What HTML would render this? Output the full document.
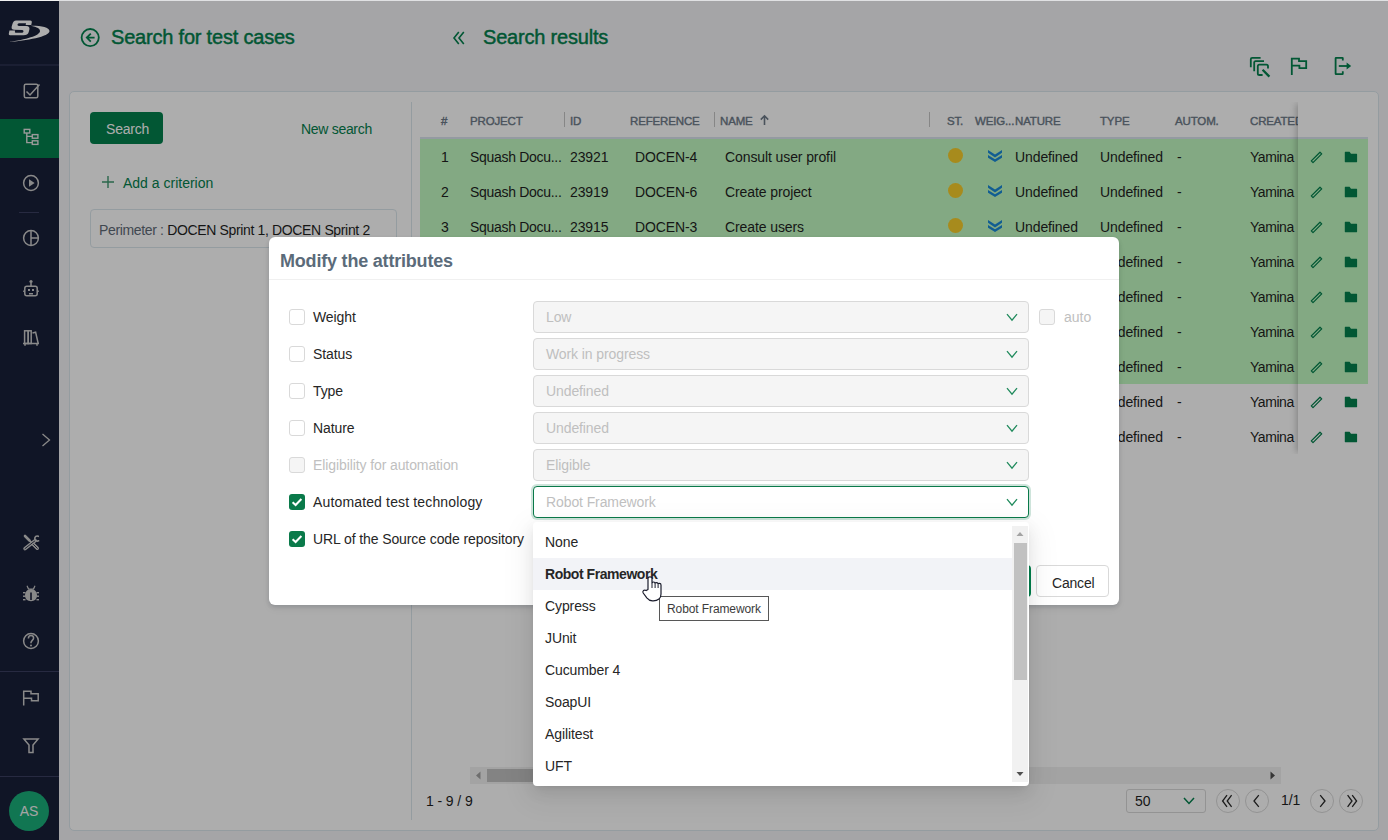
<!DOCTYPE html>
<html><head><meta charset="utf-8">
<style>
*{box-sizing:border-box;margin:0;padding:0}
html,body{width:1388px;height:840px;overflow:hidden}
body{position:relative;background:#f3f4f7;font-family:"Liberation Sans",sans-serif;font-size:14px;color:#1f1f1f}
.a{position:absolute}
.t{position:absolute;white-space:nowrap;line-height:1}
#side{left:0;top:0;width:59px;height:840px;background:#191f38}
#card{left:69px;top:91px;width:1310px;height:740px;background:#fff;border:1px solid #dbe6ec;border-radius:5px}
#overlay{left:0;top:0;width:1388px;height:840px;background:rgba(0,0,0,.32)}
#modal{left:269px;top:237px;width:850px;height:368px;background:#fff;border-radius:6px;box-shadow:0 2px 4px rgba(0,20,40,.14),0 4px 10px rgba(0,0,0,.04)}
.hd{font-size:20px;color:#03804d;letter-spacing:-0.2px;-webkit-text-stroke:0.45px #03804d}
.th{font-size:11.5px;color:#6d7a88;letter-spacing:-0.15px;-webkit-text-stroke:0.4px #6d7a88}
.td{font-size:14px;color:#1f1f1f;letter-spacing:-0.1px}
</style></head><body>
<div id="side" class="a"></div>
<svg class="a" style="left:0;top:0" width="59" height="840" viewBox="0 0 59 840">
<g fill="#fff">
<path transform="translate(3.93,0) skewX(-8)" d="M15,20.4 L29.2,20.4 Q31.2,20.4 31,22.4 L30.8,24.9 L25.2,24.9 L25.4,23.3 L18.3,23.3 Q17,23.4 17,24.6 Q17,25.9 18.6,25.9 L26,26.1 Q29.8,26.3 29.6,29.5 L29.3,32 Q28.9,35.3 24.5,35.3 L11,35.3 Q9.4,35.2 9.6,33.5 L9.8,30.5 L15.5,30.5 L15.4,32 Q15.4,32.7 16.5,32.7 L23,32.7 Q24,32.7 24,31.6 Q24,30 22.5,30 L14.5,29.8 Q11.3,29.7 11.5,26.5 L11.8,24.5 Q12.2,20.4 15,20.4 Z"/>
<path d="M8.5,41.9 C26,41 49.8,36.5 49.5,31 C49.3,27.4 41,25.6 30.5,25.8 C37.5,27 40.2,29 40,31.3 C39.8,35.5 26,39.8 8.5,41.9 Z"/>
</g>
<rect x="0" y="64.5" width="59" height="1" fill="#3a3e60"/>
<g fill="none" stroke="#cbcbcb" stroke-width="1.5">
<rect x="24.3" y="84.3" width="13.5" height="13.5" rx="1.5"/>
<path d="M26.5,91.5 L30,95 L39.5,84.5"/>
</g>
<rect x="0" y="119" width="59" height="39" fill="#03804d"/>
<g fill="none" stroke="#e4e4e4" stroke-width="1.4">
<rect x="24.2" y="129.4" width="5.6" height="3.6"/>
<rect x="32.3" y="134.6" width="5.6" height="3.6"/>
<rect x="32.3" y="140.8" width="5.6" height="3.6"/>
<path d="M26.8,133 V142.6 H32.3 M26.8,136.4 H32.3"/>
</g>
<g fill="none" stroke="#cbcbcb" stroke-width="1.5">
<circle cx="31" cy="183" r="7.4"/>
<circle cx="31" cy="238" r="7.4"/>
<path d="M31,230.6 V245.4 M31,238 H38.4"/>
<circle cx="31" cy="641" r="7.4"/>
</g>
<path d="M29,179.3 L34.6,183 L29,186.7 Z" fill="#cbcbcb"/>
<rect x="19" y="212" width="20" height="1" fill="#3a3e60"/>
<g fill="none" stroke="#cbcbcb" stroke-width="1.5">
<rect x="24.8" y="286.2" width="12.4" height="9.6" rx="2"/>
<path d="M31,283 V286.2 M23.2,291.2 H24.8 M37.2,291.2 H38.8"/>
</g>
<g fill="#cbcbcb">
<circle cx="31" cy="281.5" r="1.6"/>
<rect x="28" y="289" width="2" height="2"/><rect x="32" y="289" width="2" height="2"/>
<rect x="29" y="293" width="4" height="1.5"/>
</g>
<g fill="none" stroke="#cbcbcb" stroke-width="1.5">
<path d="M23,343.5 H39 M25,343.5 V345.8 M37,343.5 V345.8"/>
<rect x="24.6" y="330.8" width="3.6" height="12.7"/>
<rect x="28.2" y="330.8" width="3" height="12.7"/>
<path d="M32.5,333 L35.6,332.2 L38.2,343.5"/>
</g>
<path d="M42.5,434 L49.5,440 L42.5,446" fill="none" stroke="#cbcbcb" stroke-width="1.3"/>
<g fill="none" stroke-linecap="round">
<path d="M25,536 L29.5,540.5" stroke="#cbcbcb" stroke-width="2.6"/>
<path d="M32,543 L37.3,548.3" stroke="#cbcbcb" stroke-width="3.4"/>
<path d="M32,543 L37.3,548.3" stroke="#191f38" stroke-width="0.9"/>
<path d="M29,540 L32.5,543.5" stroke="#cbcbcb" stroke-width="1.2"/>
<path d="M35.2,540.6 L25,548.6" stroke="#cbcbcb" stroke-width="3.4"/>
<path d="M35.2,540.6 L25,548.6" stroke="#191f38" stroke-width="0.9"/>
<path d="M38.3,536.3 C36.6,535.3 34.5,536.8 34.8,539 C35,540.6 36.8,541.6 38.6,540.8" stroke="#cbcbcb" stroke-width="1.6"/>
</g>
<g fill="#cbcbcb">
<path d="M31,589 C35,589 37,592 37,595.5 C37,599 34.5,601.2 31,601.2 C27.5,601.2 25,599 25,595.5 C25,592 27,589 31,589 Z"/>
<path d="M27.5,585.5 L29,588.5 H33 L34.5,585.5 L35.5,586 L34,589.5 H28 L26.5,586 Z"/>
<rect x="23" y="592" width="2.5" height="1.4"/><rect x="23" y="595.5" width="2.5" height="1.4"/><rect x="23" y="599" width="2.5" height="1.4"/>
<rect x="36.5" y="592" width="2.5" height="1.4"/><rect x="36.5" y="595.5" width="2.5" height="1.4"/><rect x="36.5" y="599" width="2.5" height="1.4"/>
</g>
<rect x="30.2" y="592.5" width="1.6" height="7.5" fill="#191f38"/>
<path d="M28.4,638.6 C28.4,636.8 29.6,635.6 31,635.6 C32.5,635.6 33.6,636.7 33.6,638.1 C33.6,640.2 31,640.5 31,642.6 V643.3" fill="none" stroke="#cbcbcb" stroke-width="1.5"/><circle cx="31" cy="645.6" r="1" fill="#cbcbcb"/>
<rect x="0" y="671" width="59" height="1" fill="#3a3e60"/>
<g fill="none" stroke="#cbcbcb" stroke-width="1.5">
<path d="M23.7,705.6 V691.2 H31 V693.8 H38.2 V700.8 H31.5 V698.2 H23.7"/>
<path d="M23.9,738.9 H38.1 L33,745 V752.6 H29 V745 Z"/>
</g>
<rect x="0" y="776" width="59" height="1" fill="#3a3e60"/>
<circle cx="29" cy="811" r="20" fill="#1aae7a"/>
<text x="29" y="816.3" text-anchor="middle" font-family="Liberation Sans" font-size="14" fill="#f2f2f2">AS</text>
</svg>
<div id="card" class="a"></div>

<!-- header -->
<svg class="a" style="left:80px;top:27px" width="21" height="21" viewBox="0 0 21 21"><g fill="none" stroke="#03804d" stroke-width="1.8"><circle cx="10.2" cy="10.6" r="8.6"/><path d="M10.8,6.6 L6.8,10.6 L10.8,14.6 M6.8,10.6 H14.6"/></g></svg>
<div class="t hd" style="left:111px;top:27px">Search for test cases</div>
<svg class="a" style="left:452px;top:30px" width="14" height="16" viewBox="0 0 14 16"><g fill="none" stroke="#03804d" stroke-width="1.6"><path d="M6.8,2 L2,8 L6.8,14 M11.8,2 L7,8 L11.8,14"/></g></svg>
<div class="t hd" style="left:483px;top:27px">Search results</div>

<svg class="a" style="left:1248px;top:55px" width="24" height="24" viewBox="0 0 24 24"><g fill="none" stroke="#03804d" stroke-width="1.8" stroke-linecap="butt">
<path d="M2.8,12.2 V4.2 Q2.8,2.8 4.2,2.8 H12.6"/><path d="M6.2,16.2 V7.6 Q6.2,6.2 7.6,6.2 H16"/><path d="M14.6,20 H11.4 Q9.8,20 9.8,18.4 V11.2 Q9.8,9.6 11.4,9.6 H18.4 Q20,9.6 20,11.2 V13.6"/>
<path d="M14.6,14.8 L21.4,21.6" stroke-width="2.3" stroke-linecap="butt"/></g></svg>
<svg class="a" style="left:1289px;top:55px" width="20" height="22" viewBox="0 0 20 22"><g fill="none" stroke="#03804d" stroke-width="1.8">
<path d="M2.8,20 V3.6 H10 V6.2 H17.2 V13.2 H10.4 V10.6 H2.8"/></g></svg>
<svg class="a" style="left:1332px;top:55px" width="22" height="22" viewBox="0 0 22 22"><g fill="none" stroke="#03804d" stroke-width="1.8">
<path d="M10.8,5.6 V3.2 Q10.8,2.8 10.4,2.8 H4 Q3.6,2.8 3.6,3.2 V18.8 Q3.6,19.2 4,19.2 H10.4 Q10.8,19.2 10.8,18.8 V16.2"/>
<path d="M6.8,11 H16"/></g><path d="M14.6,7.6 L19.2,11 L14.6,14.4 Z" fill="#03804d"/></svg>

<!-- left panel -->
<div class="a" style="left:90px;top:112px;width:73px;height:32px;background:#03804d;border-radius:4px"></div>
<div class="t" style="left:106px;top:122px;color:#fff;font-size:14px;letter-spacing:-0.2px">Search</div>
<div class="t" style="left:301px;top:122px;color:#03804d;font-size:14px;letter-spacing:-0.3px">New search</div>
<svg class="a" style="left:101px;top:175px" width="14" height="14" viewBox="0 0 14 14"><path d="M7,1 V13 M1,7 H13" stroke="#3f9870" stroke-width="1.4"/></svg>
<div class="t" style="left:123px;top:176px;color:#03804d;font-size:14px">Add a criterion</div>
<div class="a" style="left:90px;top:209px;width:307px;height:39px;border:1px solid #dbe6ec;border-radius:4px"></div>
<div class="t" style="left:99px;top:223px;font-size:14px;letter-spacing:-0.35px"><span style="color:#5f6b77">Perimeter : </span><span style="color:#1f1f1f">DOCEN Sprint 1, DOCEN Sprint 2</span></div>
<div class="a" style="left:411px;top:102px;width:1px;height:718px;background:#dbe6ec"></div>
<div class="a" style="left:420px;top:137px;width:948px;height:2px;background:#dae3ee"></div>
<div class="t th" style="margin-top:0.6px;left:441px;top:115px">#</div>
<div class="t th" style="margin-top:0.6px;left:470px;top:115px">PROJECT</div>
<div class="t th" style="margin-top:0.6px;left:570px;top:115px">ID</div>
<div class="t th" style="margin-top:0.6px;left:630px;top:115px">REFERENCE</div>
<div class="t th" style="margin-top:0.6px;left:720px;top:115px">NAME</div>
<div class="t th" style="margin-top:0.6px;left:947px;top:115px">ST.</div>
<div class="t th" style="margin-top:0.6px;left:975px;top:115px">WEIG...</div>
<div class="t th" style="margin-top:0.6px;left:1015px;top:115px">NATURE</div>
<div class="t th" style="margin-top:0.6px;left:1100px;top:115px">TYPE</div>
<div class="t th" style="margin-top:0.6px;left:1175px;top:115px">AUTOM.</div>
<div class="t th" style="margin-top:0.6px;left:1250px;top:115px;width:48px;overflow:hidden">CREATED</div>
<svg class="a" style="left:759px;top:114px" width="11" height="12" viewBox="0 0 11 12"><path d="M5.5,11 V2 M1.8,5.6 L5.5,1.8 L9.2,5.6" fill="none" stroke="#6d7a88" stroke-width="1.6"/></svg>
<div class="a" style="left:564px;top:112px;width:1px;height:15px;background:#c6c6c6"></div>
<div class="a" style="left:714px;top:112px;width:1px;height:15px;background:#c6c6c6"></div>
<div class="a" style="left:929px;top:112px;width:1px;height:15px;background:#c6c6c6"></div>
<div class="a" style="left:420px;top:139px;width:948px;height:245px;background:#c2fac2"></div>
<div class="t td" style="left:441px;top:150px">1</div>
<div class="t td" style="letter-spacing:-0.3px;left:470px;top:150px">Squash Docu...</div>
<div class="t td" style="left:570px;top:150px">23921</div>
<div class="t td" style="left:635px;top:150px">DOCEN-4</div>
<div class="t td" style="left:725px;top:150px">Consult user profil</div>
<div class="a" style="left:947.8px;top:148px;width:15px;height:15px;border-radius:50%;background:#f6cd2c"></div>
<svg class="a" style="left:987px;top:149px" width="16" height="14" viewBox="0 0 16 14"><path d="M1,1 L8,5.6 L15,1 V3.8 L8,8.4 L1,3.8 Z M1,6 L8,10.3 L15,6 V8.8 L8,13.1 L1,8.8 Z" fill="#1a8ad8"/></svg>
<div class="t td" style="left:1015px;top:150px">Undefined</div>
<div class="t td" style="left:1100px;top:150px">Undefined</div>
<div class="t td" style="left:1177px;top:150px">-</div>
<div class="t td" style="left:1250px;top:150px"><span style="letter-spacing:-0.45px">Yamina</span></div>
<div class="t td" style="left:441px;top:185px">2</div>
<div class="t td" style="letter-spacing:-0.3px;left:470px;top:185px">Squash Docu...</div>
<div class="t td" style="left:570px;top:185px">23919</div>
<div class="t td" style="left:635px;top:185px">DOCEN-6</div>
<div class="t td" style="left:725px;top:185px">Create project</div>
<div class="a" style="left:947.8px;top:183px;width:15px;height:15px;border-radius:50%;background:#f6cd2c"></div>
<svg class="a" style="left:987px;top:184px" width="16" height="14" viewBox="0 0 16 14"><path d="M1,1 L8,5.6 L15,1 V3.8 L8,8.4 L1,3.8 Z M1,6 L8,10.3 L15,6 V8.8 L8,13.1 L1,8.8 Z" fill="#1a8ad8"/></svg>
<div class="t td" style="left:1015px;top:185px">Undefined</div>
<div class="t td" style="left:1100px;top:185px">Undefined</div>
<div class="t td" style="left:1177px;top:185px">-</div>
<div class="t td" style="left:1250px;top:185px"><span style="letter-spacing:-0.45px">Yamina</span></div>
<div class="t td" style="left:441px;top:220px">3</div>
<div class="t td" style="letter-spacing:-0.3px;left:470px;top:220px">Squash Docu...</div>
<div class="t td" style="left:570px;top:220px">23915</div>
<div class="t td" style="left:635px;top:220px">DOCEN-3</div>
<div class="t td" style="left:725px;top:220px">Create users</div>
<div class="a" style="left:947.8px;top:218px;width:15px;height:15px;border-radius:50%;background:#f6cd2c"></div>
<svg class="a" style="left:987px;top:219px" width="16" height="14" viewBox="0 0 16 14"><path d="M1,1 L8,5.6 L15,1 V3.8 L8,8.4 L1,3.8 Z M1,6 L8,10.3 L15,6 V8.8 L8,13.1 L1,8.8 Z" fill="#1a8ad8"/></svg>
<div class="t td" style="left:1015px;top:220px">Undefined</div>
<div class="t td" style="left:1100px;top:220px">Undefined</div>
<div class="t td" style="left:1177px;top:220px">-</div>
<div class="t td" style="left:1250px;top:220px"><span style="letter-spacing:-0.45px">Yamina</span></div>
<div class="t td" style="left:441px;top:255px">4</div>
<div class="t td" style="letter-spacing:-0.3px;left:470px;top:255px">Squash Docu...</div>
<div class="t td" style="left:570px;top:255px">23922</div>
<div class="t td" style="left:635px;top:255px">DOCEN-7</div>
<div class="t td" style="left:725px;top:255px">Delete project</div>
<div class="a" style="left:947.8px;top:253px;width:15px;height:15px;border-radius:50%;background:#f6cd2c"></div>
<svg class="a" style="left:987px;top:254px" width="16" height="14" viewBox="0 0 16 14"><path d="M1,1 L8,5.6 L15,1 V3.8 L8,8.4 L1,3.8 Z M1,6 L8,10.3 L15,6 V8.8 L8,13.1 L1,8.8 Z" fill="#1a8ad8"/></svg>
<div class="t td" style="left:1015px;top:255px">Undefined</div>
<div class="t td" style="left:1100px;top:255px">Undefined</div>
<div class="t td" style="left:1177px;top:255px">-</div>
<div class="t td" style="left:1250px;top:255px"><span style="letter-spacing:-0.45px">Yamina</span></div>
<div class="t td" style="left:441px;top:290px">5</div>
<div class="t td" style="letter-spacing:-0.3px;left:470px;top:290px">Squash Docu...</div>
<div class="t td" style="left:570px;top:290px">23916</div>
<div class="t td" style="left:635px;top:290px">DOCEN-5</div>
<div class="t td" style="left:725px;top:290px">Delete users</div>
<div class="a" style="left:947.8px;top:288px;width:15px;height:15px;border-radius:50%;background:#f6cd2c"></div>
<svg class="a" style="left:987px;top:289px" width="16" height="14" viewBox="0 0 16 14"><path d="M1,1 L8,5.6 L15,1 V3.8 L8,8.4 L1,3.8 Z M1,6 L8,10.3 L15,6 V8.8 L8,13.1 L1,8.8 Z" fill="#1a8ad8"/></svg>
<div class="t td" style="left:1015px;top:290px">Undefined</div>
<div class="t td" style="left:1100px;top:290px">Undefined</div>
<div class="t td" style="left:1177px;top:290px">-</div>
<div class="t td" style="left:1250px;top:290px"><span style="letter-spacing:-0.45px">Yamina</span></div>
<div class="t td" style="left:441px;top:325px">6</div>
<div class="t td" style="letter-spacing:-0.3px;left:470px;top:325px">Squash Docu...</div>
<div class="t td" style="left:570px;top:325px">23920</div>
<div class="t td" style="left:635px;top:325px">DOCEN-8</div>
<div class="t td" style="left:725px;top:325px">Modify project</div>
<div class="a" style="left:947.8px;top:323px;width:15px;height:15px;border-radius:50%;background:#f6cd2c"></div>
<svg class="a" style="left:987px;top:324px" width="16" height="14" viewBox="0 0 16 14"><path d="M1,1 L8,5.6 L15,1 V3.8 L8,8.4 L1,3.8 Z M1,6 L8,10.3 L15,6 V8.8 L8,13.1 L1,8.8 Z" fill="#1a8ad8"/></svg>
<div class="t td" style="left:1015px;top:325px">Undefined</div>
<div class="t td" style="left:1100px;top:325px">Undefined</div>
<div class="t td" style="left:1177px;top:325px">-</div>
<div class="t td" style="left:1250px;top:325px"><span style="letter-spacing:-0.45px">Yamina</span></div>
<div class="t td" style="left:441px;top:360px">7</div>
<div class="t td" style="letter-spacing:-0.3px;left:470px;top:360px">Squash Docu...</div>
<div class="t td" style="left:570px;top:360px">23914</div>
<div class="t td" style="left:635px;top:360px">DOCEN-2</div>
<div class="t td" style="left:725px;top:360px">Modify users</div>
<div class="a" style="left:947.8px;top:358px;width:15px;height:15px;border-radius:50%;background:#f6cd2c"></div>
<svg class="a" style="left:987px;top:359px" width="16" height="14" viewBox="0 0 16 14"><path d="M1,1 L8,5.6 L15,1 V3.8 L8,8.4 L1,3.8 Z M1,6 L8,10.3 L15,6 V8.8 L8,13.1 L1,8.8 Z" fill="#1a8ad8"/></svg>
<div class="t td" style="left:1015px;top:360px">Undefined</div>
<div class="t td" style="left:1100px;top:360px">Undefined</div>
<div class="t td" style="left:1177px;top:360px">-</div>
<div class="t td" style="left:1250px;top:360px"><span style="letter-spacing:-0.45px">Yamina</span></div>
<div class="t td" style="left:441px;top:395px">8</div>
<div class="t td" style="letter-spacing:-0.3px;left:470px;top:395px">Squash Docu...</div>
<div class="t td" style="left:570px;top:395px">23918</div>
<div class="t td" style="left:635px;top:395px">DOCEN-9</div>
<div class="t td" style="left:725px;top:395px">Search project</div>
<div class="a" style="left:947.8px;top:393px;width:15px;height:15px;border-radius:50%;background:#f6cd2c"></div>
<svg class="a" style="left:987px;top:394px" width="16" height="14" viewBox="0 0 16 14"><path d="M1,1 L8,5.6 L15,1 V3.8 L8,8.4 L1,3.8 Z M1,6 L8,10.3 L15,6 V8.8 L8,13.1 L1,8.8 Z" fill="#1a8ad8"/></svg>
<div class="t td" style="left:1015px;top:395px">Undefined</div>
<div class="t td" style="left:1100px;top:395px">Undefined</div>
<div class="t td" style="left:1177px;top:395px">-</div>
<div class="t td" style="left:1250px;top:395px"><span style="letter-spacing:-0.45px">Yamina</span></div>
<div class="t td" style="left:441px;top:430px">9</div>
<div class="t td" style="letter-spacing:-0.3px;left:470px;top:430px">Squash Docu...</div>
<div class="t td" style="left:570px;top:430px">23917</div>
<div class="t td" style="left:635px;top:430px">DOCEN-1</div>
<div class="t td" style="left:725px;top:430px">Search users</div>
<div class="a" style="left:947.8px;top:428px;width:15px;height:15px;border-radius:50%;background:#f6cd2c"></div>
<svg class="a" style="left:987px;top:429px" width="16" height="14" viewBox="0 0 16 14"><path d="M1,1 L8,5.6 L15,1 V3.8 L8,8.4 L1,3.8 Z M1,6 L8,10.3 L15,6 V8.8 L8,13.1 L1,8.8 Z" fill="#1a8ad8"/></svg>
<div class="t td" style="left:1015px;top:430px">Undefined</div>
<div class="t td" style="left:1100px;top:430px">Undefined</div>
<div class="t td" style="left:1177px;top:430px">-</div>
<div class="t td" style="left:1250px;top:430px"><span style="letter-spacing:-0.45px">Yamina</span></div>
<div class="a" style="left:1298px;top:102px;width:70px;height:352px;box-shadow:-4px 0 6px -2px rgba(0,0,0,.22);clip-path:inset(0 0 0 -12px)"></div>
<div class="a" style="left:1298px;top:102px;width:70px;height:35px;background:#fff"></div>
<div class="a" style="left:1298px;top:384px;width:70px;height:70px;background:#fff"></div>
<div class="a" style="left:1298px;top:137px;width:70px;height:2px;background:#dae3ee"></div>
<div class="a" style="left:1298px;top:139px;width:70px;height:245px;background:#c2fac2"></div>
<svg class="a" style="left:1308px;top:148px" width="16" height="16" viewBox="0 0 16 16"><path d="M3.3,12.9 L12,4.2 L13.7,5.9 L5,14.6 Z" fill="none" stroke="#03804d" stroke-width="1.3" stroke-linejoin="round"/></svg>
<svg class="a" style="left:1343px;top:148px" width="16" height="16" viewBox="0 0 16 16"><path d="M1.8,4.2 Q1.8,3.8 2.2,3.8 H6.6 L8,5.8 H13.7 Q14.1,5.8 14.1,6.2 V13.8 Q14.1,14.2 13.7,14.2 H2.2 Q1.8,14.2 1.8,13.8 Z" fill="#03804d"/></svg>
<svg class="a" style="left:1308px;top:183px" width="16" height="16" viewBox="0 0 16 16"><path d="M3.3,12.9 L12,4.2 L13.7,5.9 L5,14.6 Z" fill="none" stroke="#03804d" stroke-width="1.3" stroke-linejoin="round"/></svg>
<svg class="a" style="left:1343px;top:183px" width="16" height="16" viewBox="0 0 16 16"><path d="M1.8,4.2 Q1.8,3.8 2.2,3.8 H6.6 L8,5.8 H13.7 Q14.1,5.8 14.1,6.2 V13.8 Q14.1,14.2 13.7,14.2 H2.2 Q1.8,14.2 1.8,13.8 Z" fill="#03804d"/></svg>
<svg class="a" style="left:1308px;top:218px" width="16" height="16" viewBox="0 0 16 16"><path d="M3.3,12.9 L12,4.2 L13.7,5.9 L5,14.6 Z" fill="none" stroke="#03804d" stroke-width="1.3" stroke-linejoin="round"/></svg>
<svg class="a" style="left:1343px;top:218px" width="16" height="16" viewBox="0 0 16 16"><path d="M1.8,4.2 Q1.8,3.8 2.2,3.8 H6.6 L8,5.8 H13.7 Q14.1,5.8 14.1,6.2 V13.8 Q14.1,14.2 13.7,14.2 H2.2 Q1.8,14.2 1.8,13.8 Z" fill="#03804d"/></svg>
<svg class="a" style="left:1308px;top:253px" width="16" height="16" viewBox="0 0 16 16"><path d="M3.3,12.9 L12,4.2 L13.7,5.9 L5,14.6 Z" fill="none" stroke="#03804d" stroke-width="1.3" stroke-linejoin="round"/></svg>
<svg class="a" style="left:1343px;top:253px" width="16" height="16" viewBox="0 0 16 16"><path d="M1.8,4.2 Q1.8,3.8 2.2,3.8 H6.6 L8,5.8 H13.7 Q14.1,5.8 14.1,6.2 V13.8 Q14.1,14.2 13.7,14.2 H2.2 Q1.8,14.2 1.8,13.8 Z" fill="#03804d"/></svg>
<svg class="a" style="left:1308px;top:288px" width="16" height="16" viewBox="0 0 16 16"><path d="M3.3,12.9 L12,4.2 L13.7,5.9 L5,14.6 Z" fill="none" stroke="#03804d" stroke-width="1.3" stroke-linejoin="round"/></svg>
<svg class="a" style="left:1343px;top:288px" width="16" height="16" viewBox="0 0 16 16"><path d="M1.8,4.2 Q1.8,3.8 2.2,3.8 H6.6 L8,5.8 H13.7 Q14.1,5.8 14.1,6.2 V13.8 Q14.1,14.2 13.7,14.2 H2.2 Q1.8,14.2 1.8,13.8 Z" fill="#03804d"/></svg>
<svg class="a" style="left:1308px;top:323px" width="16" height="16" viewBox="0 0 16 16"><path d="M3.3,12.9 L12,4.2 L13.7,5.9 L5,14.6 Z" fill="none" stroke="#03804d" stroke-width="1.3" stroke-linejoin="round"/></svg>
<svg class="a" style="left:1343px;top:323px" width="16" height="16" viewBox="0 0 16 16"><path d="M1.8,4.2 Q1.8,3.8 2.2,3.8 H6.6 L8,5.8 H13.7 Q14.1,5.8 14.1,6.2 V13.8 Q14.1,14.2 13.7,14.2 H2.2 Q1.8,14.2 1.8,13.8 Z" fill="#03804d"/></svg>
<svg class="a" style="left:1308px;top:358px" width="16" height="16" viewBox="0 0 16 16"><path d="M3.3,12.9 L12,4.2 L13.7,5.9 L5,14.6 Z" fill="none" stroke="#03804d" stroke-width="1.3" stroke-linejoin="round"/></svg>
<svg class="a" style="left:1343px;top:358px" width="16" height="16" viewBox="0 0 16 16"><path d="M1.8,4.2 Q1.8,3.8 2.2,3.8 H6.6 L8,5.8 H13.7 Q14.1,5.8 14.1,6.2 V13.8 Q14.1,14.2 13.7,14.2 H2.2 Q1.8,14.2 1.8,13.8 Z" fill="#03804d"/></svg>
<svg class="a" style="left:1308px;top:393px" width="16" height="16" viewBox="0 0 16 16"><path d="M3.3,12.9 L12,4.2 L13.7,5.9 L5,14.6 Z" fill="none" stroke="#03804d" stroke-width="1.3" stroke-linejoin="round"/></svg>
<svg class="a" style="left:1343px;top:393px" width="16" height="16" viewBox="0 0 16 16"><path d="M1.8,4.2 Q1.8,3.8 2.2,3.8 H6.6 L8,5.8 H13.7 Q14.1,5.8 14.1,6.2 V13.8 Q14.1,14.2 13.7,14.2 H2.2 Q1.8,14.2 1.8,13.8 Z" fill="#03804d"/></svg>
<svg class="a" style="left:1308px;top:428px" width="16" height="16" viewBox="0 0 16 16"><path d="M3.3,12.9 L12,4.2 L13.7,5.9 L5,14.6 Z" fill="none" stroke="#03804d" stroke-width="1.3" stroke-linejoin="round"/></svg>
<svg class="a" style="left:1343px;top:428px" width="16" height="16" viewBox="0 0 16 16"><path d="M1.8,4.2 Q1.8,3.8 2.2,3.8 H6.6 L8,5.8 H13.7 Q14.1,5.8 14.1,6.2 V13.8 Q14.1,14.2 13.7,14.2 H2.2 Q1.8,14.2 1.8,13.8 Z" fill="#03804d"/></svg>
<div class="a" style="left:470px;top:767px;width:811px;height:17px;background:#f1f1f1"></div>
<div class="a" style="left:487px;top:769px;width:420px;height:13px;background:#c1c1c1"></div>
<svg class="a" style="left:470px;top:767px" width="17" height="17" viewBox="0 0 17 17"><path d="M10.5,4.5 V12.5 L6,8.5 Z" fill="#a3a3a3"/></svg>
<svg class="a" style="left:1264px;top:767px" width="17" height="17" viewBox="0 0 17 17"><path d="M6.5,4.5 V12.5 L11,8.5 Z" fill="#505050"/></svg>
<div class="t td" style="left:426px;top:794px">1 - 9 / 9</div>
<div class="a" style="left:1126px;top:789px;width:80px;height:24px;border:1px solid #d9d9d9;border-radius:3px"></div>
<div class="t td" style="left:1135px;top:794px">50</div>
<svg class="a" style="left:1182px;top:796px" width="14" height="10" viewBox="0 0 14 10"><path d="M2,2 L7,7.5 L12,2" fill="none" stroke="#03804d" stroke-width="1.5"/></svg>
<svg class="a" style="left:1216px;top:789px" width="24" height="24" viewBox="0 0 24 24"><circle cx="12" cy="12" r="11.5" fill="none" stroke="#d9d9d9"/><path d="M11,6.2 L6.6,12 L11,17.8 M15.6,6.2 L11.2,12 L15.6,17.8" fill="none" stroke="#2a2a2a" stroke-width="1.3"/></svg>
<svg class="a" style="left:1245px;top:789px" width="24" height="24" viewBox="0 0 24 24"><circle cx="12" cy="12" r="11.5" fill="none" stroke="#d9d9d9"/><path d="M13.8,6.2 L9,12 L13.8,17.8" fill="none" stroke="#2a2a2a" stroke-width="1.3"/></svg>
<svg class="a" style="left:1310px;top:789px" width="24" height="24" viewBox="0 0 24 24"><circle cx="12" cy="12" r="11.5" fill="none" stroke="#d9d9d9"/><path d="M10.2,6.2 L15,12 L10.2,17.8" fill="none" stroke="#2a2a2a" stroke-width="1.3"/></svg>
<svg class="a" style="left:1339px;top:789px" width="24" height="24" viewBox="0 0 24 24"><circle cx="12" cy="12" r="11.5" fill="none" stroke="#d9d9d9"/><path d="M8.6,6.2 L13,12 L8.6,17.8 M13.2,6.2 L17.6,12 L13.2,17.8" fill="none" stroke="#2a2a2a" stroke-width="1.3"/></svg>
<div class="t td" style="left:1281px;top:793px">1/1</div>
<div id="overlay" class="a"></div>
<div id="modal" class="a"></div>
<div class="t" style="left:280px;top:252px;font-size:18px;font-weight:bold;color:#5b6b7a;letter-spacing:-0.2px">Modify the attributes</div>
<div class="a" style="left:269px;top:279px;width:850px;height:1px;background:#f0f0f0"></div>
<div class="a" style="left:289px;top:309px;width:16px;height:16px;border-radius:3px;border:1px solid #d9d9d9;background:#fff"></div>
<div class="t" style="left:313px;top:310px;font-size:14px;color:#262626;letter-spacing:-0.1px">Weight</div>
<div class="a" style="left:533px;top:301px;width:496px;height:32px;border:1px solid #d9d9d9;border-radius:4px;background:#f5f5f5"></div>
<div class="t" style="left:546px;top:310px;font-size:14px;color:#bfbfbf;letter-spacing:-0.1px">Low</div>
<svg class="a" style="left:1006px;top:313px" width="12" height="9" viewBox="0 0 12 9"><path d="M1,1.2 L6,7.2 L11,1.2" fill="none" stroke="#1f8a5c" stroke-width="1.3"/></svg>
<div class="a" style="left:289px;top:346px;width:16px;height:16px;border-radius:3px;border:1px solid #d9d9d9;background:#fff"></div>
<div class="t" style="left:313px;top:347px;font-size:14px;color:#262626;letter-spacing:-0.1px">Status</div>
<div class="a" style="left:533px;top:338px;width:496px;height:32px;border:1px solid #d9d9d9;border-radius:4px;background:#f5f5f5"></div>
<div class="t" style="left:546px;top:347px;font-size:14px;color:#bfbfbf;letter-spacing:-0.1px">Work in progress</div>
<svg class="a" style="left:1006px;top:350px" width="12" height="9" viewBox="0 0 12 9"><path d="M1,1.2 L6,7.2 L11,1.2" fill="none" stroke="#1f8a5c" stroke-width="1.3"/></svg>
<div class="a" style="left:289px;top:383px;width:16px;height:16px;border-radius:3px;border:1px solid #d9d9d9;background:#fff"></div>
<div class="t" style="left:313px;top:384px;font-size:14px;color:#262626;letter-spacing:-0.1px">Type</div>
<div class="a" style="left:533px;top:375px;width:496px;height:32px;border:1px solid #d9d9d9;border-radius:4px;background:#f5f5f5"></div>
<div class="t" style="left:546px;top:384px;font-size:14px;color:#bfbfbf;letter-spacing:-0.1px">Undefined</div>
<svg class="a" style="left:1006px;top:387px" width="12" height="9" viewBox="0 0 12 9"><path d="M1,1.2 L6,7.2 L11,1.2" fill="none" stroke="#1f8a5c" stroke-width="1.3"/></svg>
<div class="a" style="left:289px;top:420px;width:16px;height:16px;border-radius:3px;border:1px solid #d9d9d9;background:#fff"></div>
<div class="t" style="left:313px;top:421px;font-size:14px;color:#262626;letter-spacing:-0.1px">Nature</div>
<div class="a" style="left:533px;top:412px;width:496px;height:32px;border:1px solid #d9d9d9;border-radius:4px;background:#f5f5f5"></div>
<div class="t" style="left:546px;top:421px;font-size:14px;color:#bfbfbf;letter-spacing:-0.1px">Undefined</div>
<svg class="a" style="left:1006px;top:424px" width="12" height="9" viewBox="0 0 12 9"><path d="M1,1.2 L6,7.2 L11,1.2" fill="none" stroke="#1f8a5c" stroke-width="1.3"/></svg>
<div class="a" style="left:289px;top:457px;width:16px;height:16px;border-radius:3px;border:1px solid #d9d9d9;background:#f5f5f5"></div>
<div class="t" style="left:313px;top:458px;font-size:14px;color:#c0c0c0;letter-spacing:-0.1px">Eligibility for automation</div>
<div class="a" style="left:533px;top:449px;width:496px;height:32px;border:1px solid #d9d9d9;border-radius:4px;background:#f5f5f5"></div>
<div class="t" style="left:546px;top:458px;font-size:14px;color:#bfbfbf;letter-spacing:-0.1px">Eligible</div>
<svg class="a" style="left:1006px;top:461px" width="12" height="9" viewBox="0 0 12 9"><path d="M1,1.2 L6,7.2 L11,1.2" fill="none" stroke="#1f8a5c" stroke-width="1.3"/></svg>
<div class="a" style="left:289px;top:494px;width:16px;height:16px;border-radius:3px;background:#0a7a4a"></div>
<svg class="a" style="left:289px;top:494px" width="16" height="16" viewBox="0 0 16 16"><path d="M3.6,8.2 L6.6,11 L12.4,5" fill="none" stroke="#fff" stroke-width="2"/></svg>
<div class="t" style="left:313px;top:495px;font-size:14px;color:#262626;letter-spacing:0.15px">Automated test technology</div>
<div class="a" style="left:533px;top:486px;width:496px;height:32px;border:1px solid #0a7a4a;border-radius:4px;background:#fff;box-shadow:0 0 0 2px rgba(10,122,74,.2)"></div>
<div class="t" style="left:546px;top:495px;font-size:14px;color:#bfbfbf;letter-spacing:-0.1px">Robot Framework</div>
<svg class="a" style="left:1006px;top:498px" width="12" height="9" viewBox="0 0 12 9"><path d="M1,1.2 L6,7.2 L11,1.2" fill="none" stroke="#1f8a5c" stroke-width="1.3"/></svg>
<div class="a" style="left:289px;top:531px;width:16px;height:16px;border-radius:3px;background:#0a7a4a"></div>
<svg class="a" style="left:289px;top:531px" width="16" height="16" viewBox="0 0 16 16"><path d="M3.6,8.2 L6.6,11 L12.4,5" fill="none" stroke="#fff" stroke-width="2"/></svg>
<div class="t" style="left:313px;top:532px;font-size:14px;color:#262626;letter-spacing:-0.1px">URL of the Source code repository</div>
<div class="a" style="left:1039px;top:309px;width:16px;height:16px;border-radius:3px;border:1px solid #d9d9d9;background:#f5f5f5"></div>
<div class="t" style="left:1064px;top:310px;font-size:14px;color:#c0c0c0">auto</div>
<div class="a" style="left:958px;top:565px;width:73px;height:32px;border-radius:4px;background:#03804d"></div>
<div class="a" style="left:1036px;top:565px;width:73px;height:32px;border-radius:4px;border:1px solid #d9d9d9;background:#fff"></div>
<div class="t" style="left:1052px;top:576px;font-size:14px;color:#262626;letter-spacing:-0.2px">Cancel</div>
<div class="a" style="left:533px;top:522px;width:496px;height:264px;background:#fff;border-radius:4px;box-shadow:0 3px 6px -4px rgba(0,0,0,.12),0 6px 16px 0 rgba(0,0,0,.08),0 9px 28px 8px rgba(0,0,0,.05)"></div>
<div class="a" style="left:533px;top:558px;width:479px;height:32px;background:#f2f3f7"></div>
<div class="t" style="left:545px;top:535px;font-size:14px;color:#262626;letter-spacing:-0.1px;">None</div>
<div class="t" style="left:545px;top:567px;font-size:14px;color:#262626;font-weight:bold;letter-spacing:-0.45px;">Robot Framework</div>
<div class="t" style="left:545px;top:599px;font-size:14px;color:#262626;letter-spacing:-0.1px;">Cypress</div>
<div class="t" style="left:545px;top:631px;font-size:14px;color:#262626;letter-spacing:-0.1px;">JUnit</div>
<div class="t" style="left:545px;top:663px;font-size:14px;color:#262626;letter-spacing:-0.1px;">Cucumber 4</div>
<div class="t" style="left:545px;top:695px;font-size:14px;color:#262626;letter-spacing:-0.1px;">SoapUI</div>
<div class="t" style="left:545px;top:727px;font-size:14px;color:#262626;letter-spacing:-0.1px;">Agilitest</div>
<div class="t" style="left:545px;top:759px;font-size:14px;color:#262626;letter-spacing:-0.1px;">UFT</div>
<div class="a" style="left:1012px;top:526px;width:16px;height:256px;background:#f1f1f1"></div>
<div class="a" style="left:1014px;top:543px;width:13px;height:137px;background:#c1c1c1"></div>
<svg class="a" style="left:1012px;top:526px" width="16" height="16" viewBox="0 0 16 16"><path d="M4.5,10 H11.5 L8,6 Z" fill="#a3a3a3"/></svg>
<svg class="a" style="left:1012px;top:766px" width="16" height="16" viewBox="0 0 16 16"><path d="M4.5,6 H11.5 L8,10 Z" fill="#505050"/></svg>
<div class="a" style="left:659px;top:596px;width:110px;height:25px;border:1px solid #575757;background:#fff"></div>
<div class="t" style="left:667px;top:603px;font-size:12px;color:#3c3c3c;letter-spacing:-0.1px">Robot Framework</div>
<svg class="a" style="left:640px;top:574px" width="24" height="30" viewBox="0 0 24 30"><path d="M8,15.5 V4.5 Q8,2.8 10,2.8 Q12,2.8 12,4.5 V9.2 Q12.2,8 13.6,8 Q15,8 15.1,9.4 Q15.4,8.6 16.6,8.6 Q18,8.6 18.1,10 Q18.4,9.4 19.5,9.4 Q21,9.4 21,11 V20 Q21,23.5 19,25 Q16.5,27 12.5,26.8 Q9,26.6 6.8,23.8 L3.2,19 Q2.4,17.6 3.4,16.6 Q4.8,15.6 6.2,16.6 Z" fill="#fff" stroke="#1a1c2c" stroke-width="1.2" stroke-linejoin="round"/><path d="M12,9.5 V14 M15.1,9.8 V14 M18.1,10.4 V14" stroke="#1a1c2c" stroke-width="1"/></svg>
<div class="a" style="left:0;top:0;width:59px;height:1px;background:#f0f0f0"></div><div class="a" style="left:59px;top:0;width:1329px;height:1px;background:#e0e1e3"></div>
</body></html>
